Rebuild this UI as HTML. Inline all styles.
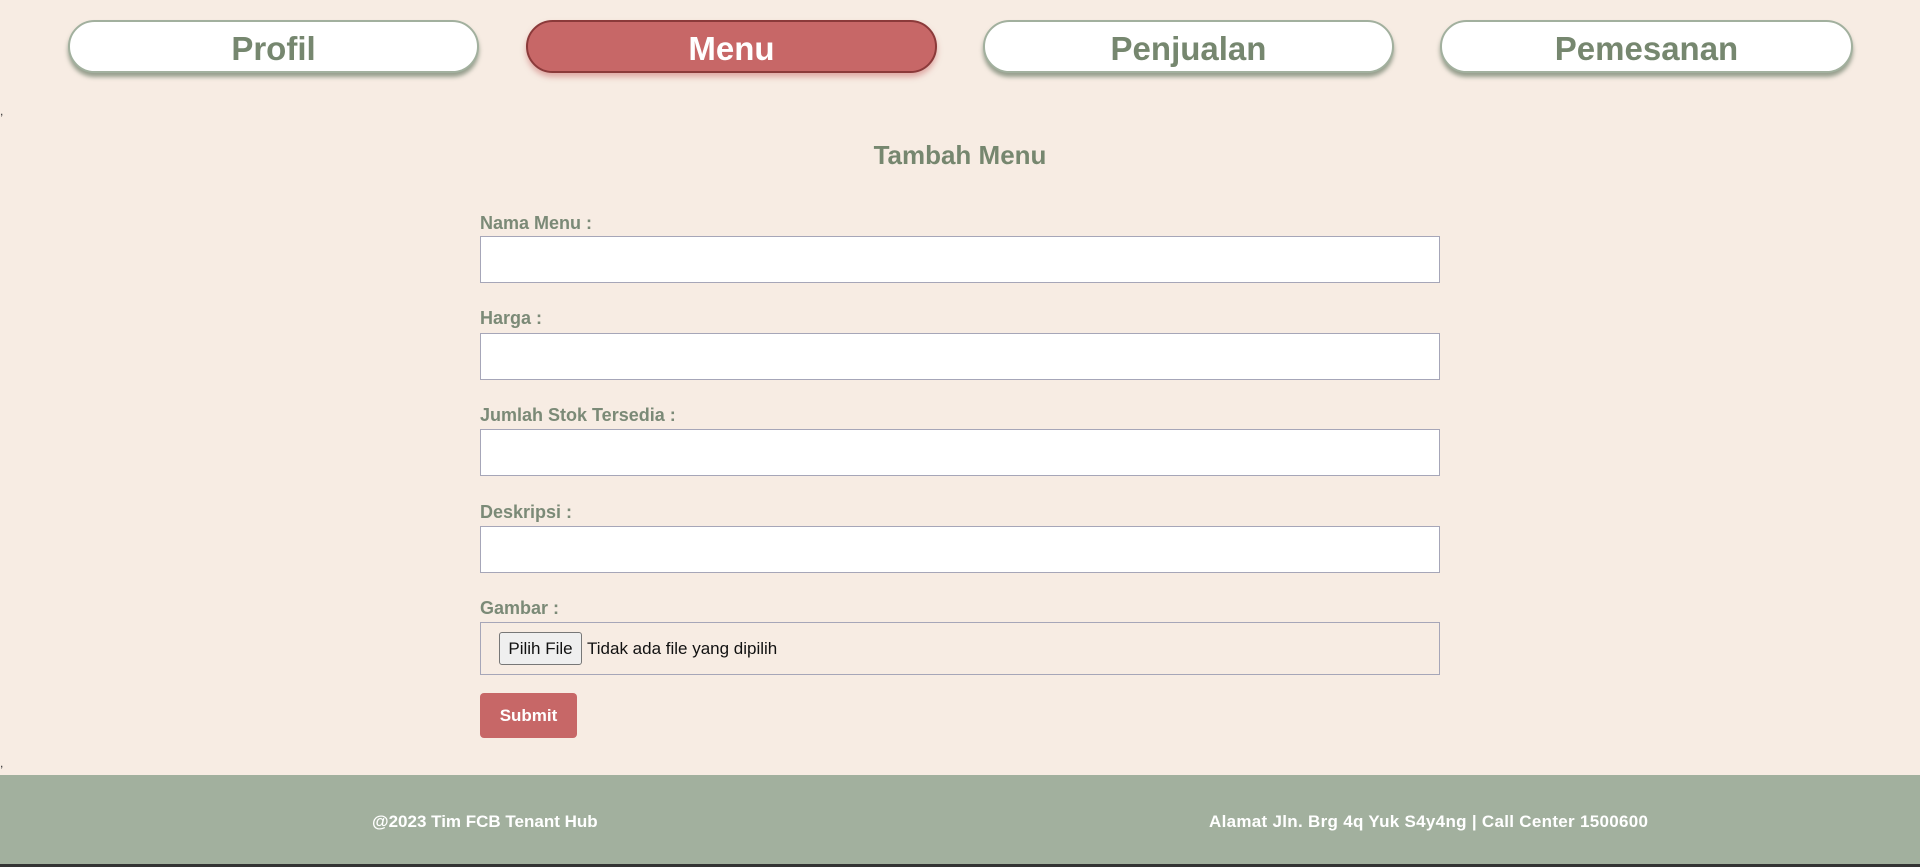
<!DOCTYPE html>
<html><head><meta charset="utf-8"><style>
*{box-sizing:border-box;margin:0;padding:0}
body{width:1920px;height:867px;background:#f7ece3;font-family:"Liberation Sans",sans-serif;position:relative;overflow:hidden}
.nav{position:absolute;top:20px;height:53px;border-radius:27px;background:#fff;border:2px solid #a2b09e;box-shadow:0 4px 4px rgba(110,125,105,.7);font-weight:bold;font-size:33px;color:#76876f;text-align:center;line-height:53px}
.nav.act{background:#c76767;border-color:#8b3a3a;color:#fff;box-shadow:0 4px 6px rgba(199,103,103,.5)}
.lbl{position:absolute;left:480px;font-weight:bold;font-size:18px;color:#7b8a77}
.inp{position:absolute;left:480px;width:960px;height:47px;background:#fff;border:1px solid #a6a6b8}
.comma{position:absolute;left:0;font-size:12px;color:#333}
</style></head><body>
<div class="nav" style="left:68px;width:411px">Profil</div>
<div class="nav act" style="left:526px;width:411px">Menu</div>
<div class="nav" style="left:983px;width:411px">Penjualan</div>
<div class="nav" style="left:1440px;width:413px">Pemesanan</div>
<div class="comma" style="top:104px">,</div>
<div style="position:absolute;left:0;width:1920px;top:140px;text-align:center;font-weight:bold;font-size:26px;color:#76876f">Tambah Menu</div>
<div class="lbl" style="top:213px">Nama Menu :</div><div class="inp" style="top:236px"></div>
<div class="lbl" style="top:308px">Harga :</div><div class="inp" style="top:333px"></div>
<div class="lbl" style="top:405px">Jumlah Stok Tersedia :</div><div class="inp" style="top:429px"></div>
<div class="lbl" style="top:502px">Deskripsi :</div><div class="inp" style="top:526px"></div>
<div class="lbl" style="top:598px">Gambar :</div>
<div style="position:absolute;left:480px;top:622px;width:960px;height:53px;border:1px solid #a6a6b8;font-size:17px;color:#111">
<span style="position:absolute;left:18px;top:9px;height:33px;width:83px;border:1px solid #777;border-radius:3px;background:#efefef;text-align:center;line-height:31px">Pilih File</span>
<span style="position:absolute;left:106px;top:16px">Tidak ada file yang dipilih</span></div>
<div style="position:absolute;left:480px;top:693px;width:97px;height:45px;background:#c76767;border-radius:4px;color:#fff;font-weight:bold;font-size:17px;text-align:center;line-height:45px">Submit</div>
<div class="comma" style="top:756px">,</div>
<div style="position:absolute;left:0;top:775px;width:1920px;height:92px;background:#a2b09e;border-bottom:3px solid #333;color:#fff;font-weight:bold;font-size:17px">
<span style="position:absolute;left:372px;top:37px">@2023 Tim FCB Tenant Hub</span>
<span style="position:absolute;left:1209px;top:37px;letter-spacing:0.3px">Alamat Jln. Brg 4q Yuk S4y4ng | Call Center 1500600</span></div>
</body></html>
